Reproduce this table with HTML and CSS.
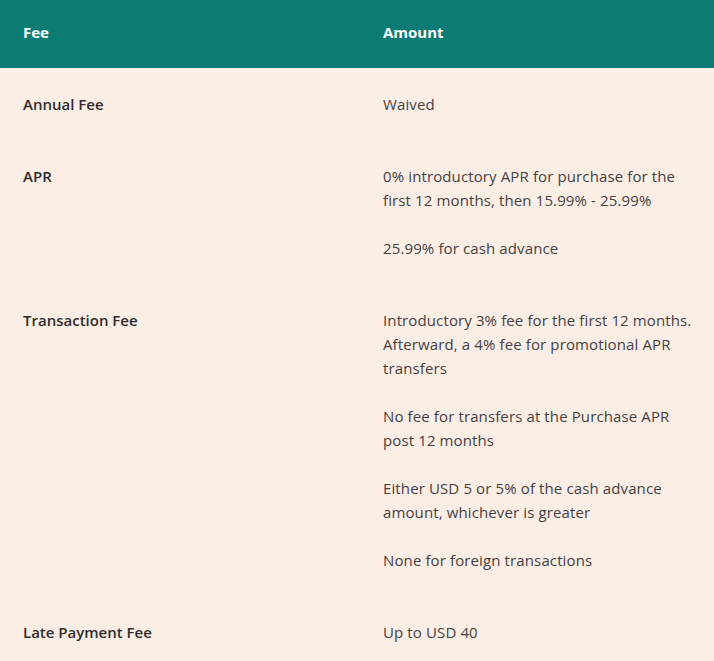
FILE: index.html
```html
<!DOCTYPE html>
<html lang="en">
<head>
<meta charset="utf-8">
<title>Fees</title>
<link rel="stylesheet" href="styles.css">
</head>
<body>
<table class="fees">
  <thead>
    <tr>
      <th class="col-fee">Fee</th>
      <th class="col-amount">Amount</th>
    </tr>
  </thead>
  <tbody>
    <tr>
      <td class="label">Annual Fee</td>
      <td class="value"><p>Waived</p></td>
    </tr>
    <tr>
      <td class="label">APR</td>
      <td class="value">
        <p>0% introductory APR for purchase for the first 12 months, then 15.99% - 25.99%</p>
        <p>25.99% for cash advance</p>
      </td>
    </tr>
    <tr>
      <td class="label">Transaction Fee</td>
      <td class="value">
        <p>Introductory 3% fee for the first 12 months. Afterward, a 4% fee for promotional APR transfers</p>
        <p>No fee for transfers at the Purchase APR post 12 months</p>
        <p>Either USD 5 or 5% of the cash advance amount, whichever is greater</p>
        <p>None for foreign transactions</p>
      </td>
    </tr>
    <tr>
      <td class="label">Late Payment Fee</td>
      <td class="value"><p>Up to USD 40</p></td>
    </tr>
  </tbody>
</table>
</body>
</html>
```

FILE: styles.css
```css
html, body {
  margin: 0;
  padding: 0;
  background: #fcede5;
}

.fees {
  width: 714px;
  border-collapse: collapse;
  table-layout: fixed;
  font-family: "Open Sans", "Liberation Sans", sans-serif;
  font-size: 15px;
  line-height: 24px;
  color: #2e2e2e;
}

.fees th {
  background: #0b7b73;
  color: #ffffff;
  font-weight: 700;
  text-align: left;
  padding: 20px 16px 24px 23px;
  vertical-align: top;
}

.col-fee {
  width: 321px;
}

.fees td {
  padding: 24px 16px 24px 23px;
  vertical-align: top;
}

.label {
  font-weight: 600;
}

.value {
  color: #434343;
  letter-spacing: 0.12px;
}

.value p {
  margin: 0 0 24px;
}

.value p:last-child {
  margin-bottom: 0;
}
```
